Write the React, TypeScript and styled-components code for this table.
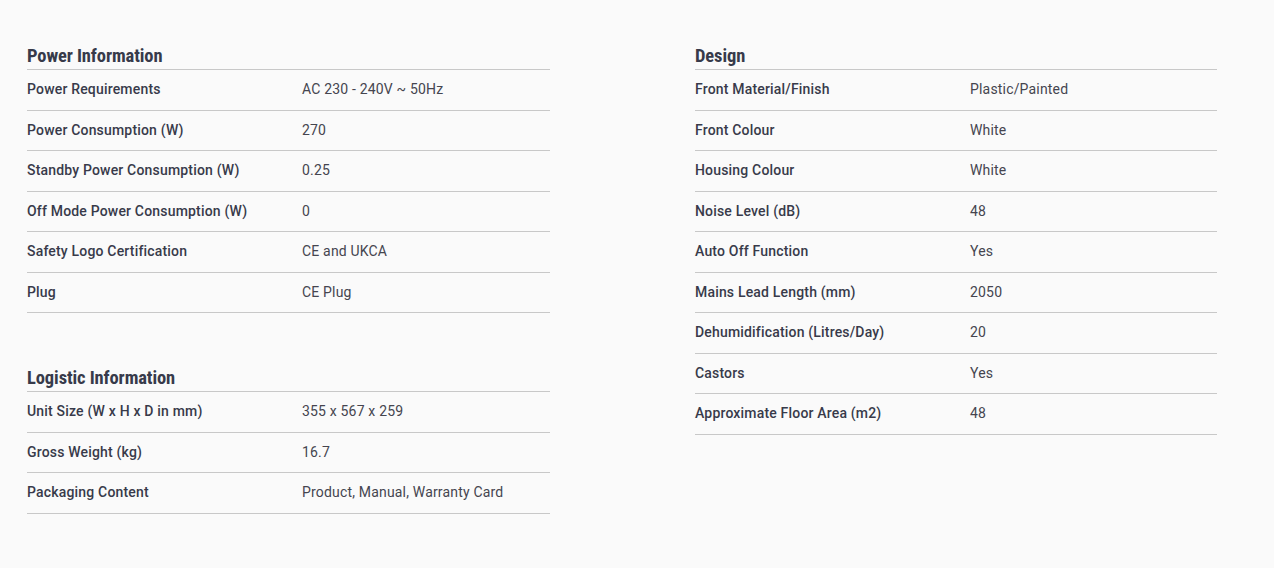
import React from "react";
import styled, { createGlobalStyle } from "styled-components";

const Global = createGlobalStyle`
  html, body { margin: 0; padding: 0; background: #fafafa; }
  body { font-family: Roboto, "Noto Sans", sans-serif; color: #3c3c4c; }
`;

const Page = styled.div`
  display: grid;
  grid-template-columns: 523px 522px;
  column-gap: 145px;
  padding: 41px 0 0 27px;
`;

const Column = styled.div`
  display: flex;
  flex-direction: column;
  gap: 50px;
`;

const Section = styled.section`
  display: flex;
  flex-direction: column;
`;

const Heading = styled.h2`
  margin: 0;
  padding: 3px 0 1px;
  font-size: 18.5px;
  line-height: 24px;
  font-weight: 700;
  font-stretch: condensed;
  letter-spacing: -0.1px;
  color: #373a4a;
  border-bottom: 1px solid #c8c8c8;
`;

const Row = styled.div`
  display: grid;
  grid-template-columns: 275px 1fr;
  padding: 10px 0;
  line-height: 19.5px;
  font-size: 14px;
  letter-spacing: 0.18px;
  border-bottom: 1px solid #c8c8c8;
`;

const Label = styled.span`
  font-weight: 500;
  color: #383a4a;
`;

const Value = styled.span`
  font-weight: 400;
  color: #45454f;
`;

type Spec = [string, string];

const power: Spec[] = [
  ["Power Requirements", "AC 230 - 240V ~ 50Hz"],
  ["Power Consumption (W)", "270"],
  ["Standby Power Consumption (W)", "0.25"],
  ["Off Mode Power Consumption (W)", "0"],
  ["Safety Logo Certification", "CE and UKCA"],
  ["Plug", "CE Plug"],
];

const logistic: Spec[] = [
  ["Unit Size (W x H x D in mm)", "355 x 567 x 259"],
  ["Gross Weight (kg)", "16.7"],
  ["Packaging Content", "Product, Manual, Warranty Card"],
];

const design: Spec[] = [
  ["Front Material/Finish", "Plastic/Painted"],
  ["Front Colour", "White"],
  ["Housing Colour", "White"],
  ["Noise Level (dB)", "48"],
  ["Auto Off Function", "Yes"],
  ["Mains Lead Length (mm)", "2050"],
  ["Dehumidification (Litres/Day)", "20"],
  ["Castors", "Yes"],
  ["Approximate Floor Area (m2)", "48"],
];

const SpecSection = ({ title, rows }: { title: string; rows: Spec[] }) => (
  <Section>
    <Heading>{title}</Heading>
    {rows.map(([k, v]) => (
      <Row key={k}>
        <Label>{k}</Label>
        <Value>{v}</Value>
      </Row>
    ))}
  </Section>
);

export default function App() {
  return (
    <>
      <Global />
      <Page>
        <Column>
          <SpecSection title="Power Information" rows={power} />
          <SpecSection title="Logistic Information" rows={logistic} />
        </Column>
        <Column>
          <SpecSection title="Design" rows={design} />
        </Column>
      </Page>
    </>
  );
}
